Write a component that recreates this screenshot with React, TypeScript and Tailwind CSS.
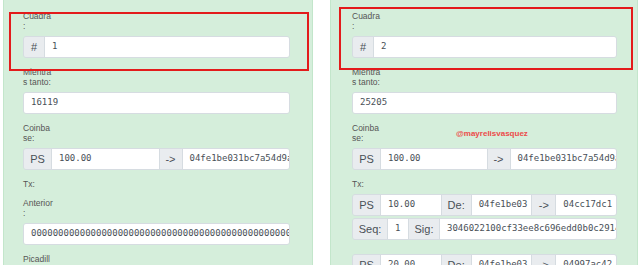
import React from 'react'

const mono = { fontFamily: '"DejaVu Sans Mono", "Liberation Mono", monospace' }

function Label({ lines }: { lines: string[] }) {
  return (
    <div className="mb-[5px] text-[8.5px] leading-[10px] text-[#555]">
      {lines.map((l, i) => (
        <div key={i}>{l}</div>
      ))}
    </div>
  )
}

function Addon({ text, className }: { text: string; className: string }) {
  return (
    <div
      className={`flex shrink-0 items-center justify-center bg-[#e9ecef] text-[11px] text-[#495057] ${className}`}
    >
      {text}
    </div>
  )
}

function Field({ value, className }: { value: string; className: string }) {
  return (
    <div
      className={`flex items-center overflow-hidden whitespace-nowrap bg-white pl-[7px] text-[9px] text-[#495057] ${className}`}
      style={mono}
    >
      {value}
    </div>
  )
}

function Group({ children }: { children: React.ReactNode }) {
  return (
    <div className="flex h-[22px] overflow-hidden rounded-[3px] border border-[#d6dce1] [&>*+*]:border-l [&>*+*]:border-[#d6dce1]">
      {children}
    </div>
  )
}

function Tx({ amount, from, to, seq, sig }: { amount: string; from: string; to: string; seq?: string; sig?: string }) {
  return (
    <div className="mb-[14px] flex flex-col gap-[2px]">
      <Group>
        <Addon text="PS" className="w-[27px]" />
        <Field value={amount} className="flex-1" />
        <Addon text="De:" className="w-[30px]" />
        <Field value={from} className="flex-1" />
        <Addon text="->" className="w-[24px]" />
        <Field value={to} className="flex-1" />
      </Group>
      {seq && (
        <Group>
          <Addon text="Seq:" className="w-[34px]" />
          <Field value={seq} className="w-[21px]" />
          <Addon text="Sig:" className="w-[31px]" />
          <Field value={sig || ''} className="flex-1" />
        </Group>
      )}
    </div>
  )
}

function Block({ num, nonce, children, pad }: { num: string; nonce: string; children?: React.ReactNode; pad: string }) {
  return (
    <div className={`border-x border-[#c3e6cb] bg-[#d5eedb] pt-[11px] ${pad}`} style={{ fontFamily: '"Liberation Sans", Arial, sans-serif' }}>
      <div className="mb-[9px]">
        <Label lines={['Cuadra', ':']} />
        <Group>
          <Addon text="#" className="w-[20px]" />
          <Field value={num} className="flex-1" />
        </Group>
      </div>
      <div className="mb-[9px]">
        <Label lines={['Mientra', 's tanto:']} />
        <Group>
          <Field value={nonce} className="flex-1" />
        </Group>
      </div>
      <div className="mb-[9px]">
        <Label lines={['Coinba', 'se:']} />
        <Group>
          <Addon text="PS" className="w-[27px]" />
          <Field value="100.00" className="flex-1" />
          <Addon text="->" className="w-[23px]" />
          <Field value="04fe1be031bc7a54d9a2c3e8f01b5d7c6e" className="flex-1" />
        </Group>
      </div>
      <div className="mb-[9px]">
        <Label lines={['Tx:']} />
        {children}
      </div>
      <div className="mb-[9px]">
        <Label lines={['Anterior', ':']} />
        <Group>
          <Field value={'0'.repeat(64)} className="flex-1" />
        </Group>
      </div>
      <div className="mb-[9px]">
        <Label lines={['Picadill', 'o:']} />
      </div>
    </div>
  )
}

export default function App() {
  return (
    <div className="relative h-[265px] w-[640px] overflow-hidden bg-white">
      <div className="flex gap-[17px] pl-[3px]">
        <div className="w-[310px]">
          <Block num="1" nonce="16119" pad="pl-[19px] pr-[22px]" />
        </div>
        <div className="w-[308px]">
          <Block num="2" nonce="25205" pad="pl-[21px] pr-[20px]">
            <Tx amount="10.00" from="04fe1be03" to="04cc17dc1" seq="1" sig="3046022100cf33ee8c696edd0b0c2914a7f5e" />
            <Tx amount="20.00" from="04fe1be03" to="04997ac42" seq="2" sig="30450221009c4e1f" />
          </Block>
        </div>
      </div>

      <div className="pointer-events-none absolute left-[9px] top-[12px] h-[59px] w-[300px] border-2 border-[#e31b1b]" />
      <div className="pointer-events-none absolute left-[339px] top-[7px] h-[63px] w-[294px] border-2 border-[#e31b1b]" />
      <div
        className="absolute left-[456px] top-[128px] text-[8px] font-bold text-[#ec4a4a]"
        style={{ fontFamily: '"Liberation Sans", Arial, sans-serif' }}
      >
        @mayrelisvasquez
      </div>
    </div>
  )
}
